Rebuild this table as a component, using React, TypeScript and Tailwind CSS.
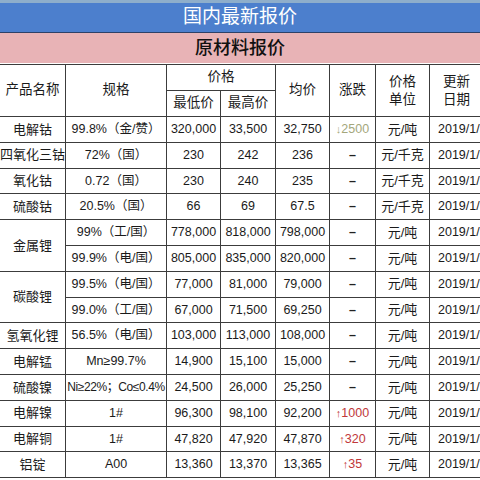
import React from "react";

type Row = {
  name?: string;
  span?: number;
  spec: string;
  low: string;
  high: string;
  avg: string;
  change: string;
  dir?: "up" | "down";
  unit: string;
};

const rows: Row[] = [
  { name: "电解钴", spec: "99.8%（金/赞）", low: "320,000", high: "33,500", avg: "32,750", change: "2500", dir: "down", unit: "元/吨" },
  { name: "四氧化三钴", spec: "72%（国）", low: "230", high: "242", avg: "236", change: "–", unit: "元/千克" },
  { name: "氧化钴", spec: "0.72（国）", low: "230", high: "240", avg: "235", change: "–", unit: "元/千克" },
  { name: "硫酸钴", spec: "20.5%（国）", low: "66", high: "69", avg: "67.5", change: "–", unit: "元/千克" },
  { name: "金属锂", span: 2, spec: "99%（工/国）", low: "778,000", high: "818,000", avg: "798,000", change: "–", unit: "元/吨" },
  { spec: "99.9%（电/国）", low: "805,000", high: "835,000", avg: "820,000", change: "–", unit: "元/吨" },
  { name: "碳酸锂", span: 2, spec: "99.5%（电/国）", low: "77,000", high: "81,000", avg: "79,000", change: "–", unit: "元/吨" },
  { spec: "99.0%（工/国）", low: "67,000", high: "71,500", avg: "69,250", change: "–", unit: "元/吨" },
  { name: "氢氧化锂", spec: "56.5%（电/国）", low: "103,000", high: "113,000", avg: "108,000", change: "–", unit: "元/吨" },
  { name: "电解锰", spec: "Mn≥99.7%", low: "14,900", high: "15,100", avg: "15,000", change: "–", unit: "元/吨" },
  { name: "硫酸镍", spec: "Ni≥22%；Co≤0.4%", low: "24,500", high: "26,000", avg: "25,250", change: "–", unit: "元/吨" },
  { name: "电解镍", spec: "1#", low: "96,300", high: "98,100", avg: "92,200", change: "1000", dir: "up", unit: "元/吨" },
  { name: "电解铜", spec: "1#", low: "47,820", high: "47,920", avg: "47,870", change: "320", dir: "up", unit: "元/吨" },
  { name: "铝锭", spec: "A00", low: "13,360", high: "13,370", avg: "13,365", change: "35", dir: "up", unit: "元/吨" },
];

const cell = "border border-[#3c3c3c] text-center align-middle p-0 whitespace-nowrap";

const Change = ({ r }: { r: Row }) => {
  if (r.dir === "down")
    return (
      <span className="text-[#a4a77c]">
        <span className="text-[11px] font-light">↓</span>
        {r.change}
      </span>
    );
  if (r.dir === "up")
    return (
      <span className="text-[#c0383a]">
        <span className="text-[11px] font-light">↑</span>
        {r.change}
      </span>
    );
  return <span className="font-bold text-[#222]">{r.change}</span>;
};

export default function App() {
  return (
    <div
      className="w-[480px] h-[480px] overflow-hidden bg-white text-[#1a1a1a]"
      style={{ fontFamily: '"Liberation Sans", "Noto Sans CJK SC", sans-serif' }}
    >
      <div className="h-[3px] bg-[#8eaecb]" />
      <div className="h-[30px] bg-[#4c7fcd] flex items-center justify-center text-white text-[19px] border-b border-[#2d4168]">
        国内最新报价
      </div>
      <div className="h-[30px] bg-[#e8b3b6] flex items-center justify-center text-[18px] font-medium text-[#111]">
        原材料报价
      </div>
      <div className="h-[1px] bg-white" />
      <table className="table-fixed border-collapse w-[500px] text-[12.5px] -ml-px">
        <colgroup>
          <col className="w-[66px]" />
          <col className="w-[101px]" />
          <col className="w-[54px]" />
          <col className="w-[55px]" />
          <col className="w-[54px]" />
          <col className="w-[46px]" />
          <col className="w-[54px]" />
          <col className="w-[70px]" />
        </colgroup>
        <thead className="text-[13.5px]">
          <tr className="h-[26px]">
            <th rowSpan={2} className={`${cell} font-normal`}>产品名称</th>
            <th rowSpan={2} className={`${cell} font-normal`}>规格</th>
            <th colSpan={2} className={`${cell} font-normal`}>价格</th>
            <th rowSpan={2} className={`${cell} font-normal`}>均价</th>
            <th rowSpan={2} className={`${cell} font-normal`}>涨跌</th>
            <th rowSpan={2} className={`${cell} font-normal leading-[18px]`}>价格<br />单位</th>
            <th rowSpan={2} className={`${cell} font-normal leading-[18px] text-left pl-[13px]`}>更新<br />日期</th>
          </tr>
          <tr className="h-[26px]">
            <th className={`${cell} font-normal`}>最低价</th>
            <th className={`${cell} font-normal`}>最高价</th>
          </tr>
        </thead>
        <tbody>
          {rows.map((r, i) => (
            <tr key={i} className="h-[25.8px]">
              {r.name !== undefined && (
                <td rowSpan={r.span ?? 1} className={`${cell} text-[13px]`}>{r.name}</td>
              )}
              <td className={`${cell} ${r.spec.length > 12 ? "text-[12px] tracking-[-0.4px]" : ""}`}>{r.spec}</td>
              <td className={cell}>{r.low}</td>
              <td className={cell}>{r.high}</td>
              <td className={cell}>{r.avg}</td>
              <td className={cell}><Change r={r} /></td>
              <td className={`${cell} text-[13px]`}>{r.unit}</td>
              <td className={`${cell} text-left pl-[8px]`}>2019/1/31</td>
            </tr>
          ))}
        </tbody>
      </table>
    </div>
  );
}
